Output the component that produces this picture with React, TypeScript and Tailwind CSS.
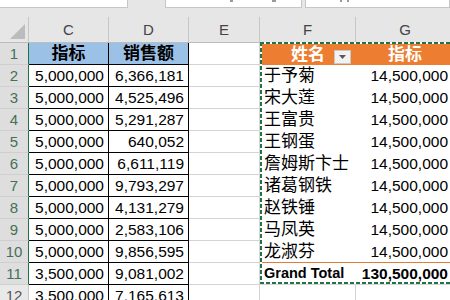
import React from "react";

const C = ["5,000,000","5,000,000","5,000,000","5,000,000","5,000,000","5,000,000","5,000,000","5,000,000","5,000,000","3,500,000","3,500,000"];
const D = ["6,366,181","4,525,496","5,291,287","640,052","6,611,119","9,793,297","4,131,279","2,583,106","9,856,595","9,081,002","7,165,613"];
const F = ["于予菊","宋大莲","王富贵","王钢蛋","詹姆斯卞士","诸葛钢铁","赵铁锤","马凤英","龙淑芬"];

function RowHead({ n, sel }: { n: number; sel: boolean }) {
  return (
    <div
      className={
        "w-[29px] shrink-0 h-full flex items-center justify-center border-b border-r text-[15px] " +
        (sel
          ? "bg-[#dedede] text-[#44705a] border-b-[#cfcfcf] border-r-[#217346]"
          : "bg-[#e9e9e9] text-[#555] border-b-[#cfcfcf] border-r-[#c6c6c6]")
      }
    >
      {n}
    </div>
  );
}

function NumCell({ v }: { v: string }) {
  return (
    <div className="w-[80px] shrink-0 h-full flex items-center justify-end pr-[4px] border-r border-b border-black text-[15.5px] text-black">
      {v}
    </div>
  );
}

function ECell() {
  return <div className="w-[71px] shrink-0 h-full border-r border-b border-[#d4d4d4] bg-white" />;
}

export default function App() {
  return (
    <div className="relative w-[450px] h-[300px] overflow-hidden bg-white font-['Liberation_Sans','Noto_Sans_CJK_SC',sans-serif] leading-none">
      {/* top strip */}
      <div className="flex h-[8px] bg-[#e6e6e6]">
        <div className="w-[128px] shrink-0 bg-white border-b border-r border-[#c6c6c6]" />
        <div className="w-[37px] shrink-0" />
        <div className="w-[137px] shrink-0 bg-white border-b border-x border-[#c6c6c6] relative">
          <span className="absolute left-[64px] top-0 w-[3px] h-[2px] bg-[#9a9a9a]" />
          <span className="absolute left-[106px] top-0 w-[4px] h-[2px] bg-[#9a9a9a]" />
        </div>
        <div className="w-[3px] shrink-0" />
        <div className="w-[145px] shrink-0 bg-white border-b border-x border-[#c6c6c6] relative">
          <span className="absolute left-[34px] top-0 w-[2px] h-[2px] bg-[#9a9a9a]" />
          <span className="absolute left-[41px] top-0 w-[2px] h-[2px] bg-[#9a9a9a]" />
        </div>
      </div>
      {/* gap + column header */}
      <div className="bg-[#e6e6e6] pt-[9px]">
        <div className="flex h-[26px] border-b border-[#bdbdbd] text-[15px] text-[#444]">
          <div className="w-[29px] shrink-0 border-r border-[#c6c6c6] flex items-end justify-end pr-[3px] pb-[3px]">
            <svg width="15" height="15" viewBox="0 0 15 15">
              <polygon points="15,0 15,15 0,15" fill="#bcbcbc" />
            </svg>
          </div>
          <div className="w-[80px] shrink-0 border-r border-[#c6c6c6] flex items-center justify-center">C</div>
          <div className="w-[80px] shrink-0 border-r border-[#c6c6c6] flex items-center justify-center">D</div>
          <div className="w-[71px] shrink-0 border-r border-[#c6c6c6] flex items-center justify-center">E</div>
          <div className="w-[96px] shrink-0 border-r border-[#c6c6c6] flex items-center justify-center">F</div>
          <div className="w-[98px] shrink-0 flex items-center justify-center">G</div>
        </div>
      </div>

      {/* row 1 */}
      <div className="flex h-[22px]">
        <RowHead n={1} sel />
        <div className="w-[80px] shrink-0 h-full flex items-center justify-center border-r border-b border-black bg-[#9bc2e6] text-[17px] font-bold text-black">
          指标
        </div>
        <div className="w-[80px] shrink-0 h-full flex items-center justify-center border-r border-b border-black bg-[#9bc2e6] text-[17px] font-bold text-black">
          销售额
        </div>
        <ECell />
        <div className="relative w-[96px] shrink-0 h-full flex items-center justify-center bg-[#ed7d31] text-white text-[17px] font-bold">
          姓名
          <div className="absolute top-[7px] right-[5px] w-[17px] h-[14px] bg-[#f2f2f2] border border-[#c9c9c9] flex items-center justify-center">
            <svg width="7" height="4" viewBox="0 0 7 4">
              <polygon points="0,0 7,0 3.5,4" fill="#595959" />
            </svg>
          </div>
        </div>
        <div className="w-[98px] shrink-0 h-full flex items-center justify-center bg-[#ed7d31] text-white text-[17px] font-bold">
          指标
        </div>
      </div>

      {/* rows 2-10 */}
      {F.map((name, i) => (
        <div key={i} className="flex h-[22px]">
          <RowHead n={i + 2} sel />
          <NumCell v={C[i]} />
          <NumCell v={D[i]} />
          <ECell />
          <div
            className={
              "w-[96px] shrink-0 h-full flex items-center pl-[4px] text-[17px] text-black border-b " +
              (i === 8 ? "border-[#e07b39]" : "border-white")
            }
          >
            {name}
          </div>
          <div
            className={
              "w-[98px] shrink-0 h-full flex items-center justify-end pr-[6px] text-[15.5px] text-black border-b " +
              (i === 8 ? "border-[#e07b39]" : "border-white")
            }
          >
            14,500,000
          </div>
        </div>
      ))}

      {/* row 11 */}
      <div className="flex h-[22px]">
        <RowHead n={11} sel />
        <NumCell v={C[9]} />
        <NumCell v={D[9]} />
        <ECell />
        <div className="w-[96px] shrink-0 h-full flex items-center pl-[4px] text-[14.5px] font-bold text-black border-b border-[#d4d4d4]">
          Grand Total
        </div>
        <div className="w-[98px] shrink-0 h-full flex items-center justify-end pr-[6px] text-[15.5px] font-bold text-black border-b border-[#d4d4d4]">
          130,500,000
        </div>
      </div>

      {/* row 12 */}
      <div className="flex h-[22px]">
        <RowHead n={12} sel={false} />
        <NumCell v={C[10]} />
        <NumCell v={D[10]} />
        <ECell />
        <div className="w-[96px] shrink-0 h-full border-r border-b border-[#d4d4d4]" />
        <div className="w-[98px] shrink-0 h-full border-b border-[#d4d4d4]" />
      </div>

      {/* copy marquee over F1:G11 */}
      <div className="absolute left-[260px] top-[42px] w-[200px] h-[2px] bg-[repeating-linear-gradient(to_right,#217346_0_4px,#ffffff_4px_6px)]" />
      <div className="absolute left-[260px] top-[42px] w-[2px] h-[242px] bg-[repeating-linear-gradient(to_bottom,#217346_0_4px,#ffffff_4px_6px)]" />
      <div className="absolute left-[260px] top-[282px] w-[200px] h-[2px] bg-[repeating-linear-gradient(to_right,#217346_0_4px,#ffffff_4px_6px)]" />
    </div>
  );
}
